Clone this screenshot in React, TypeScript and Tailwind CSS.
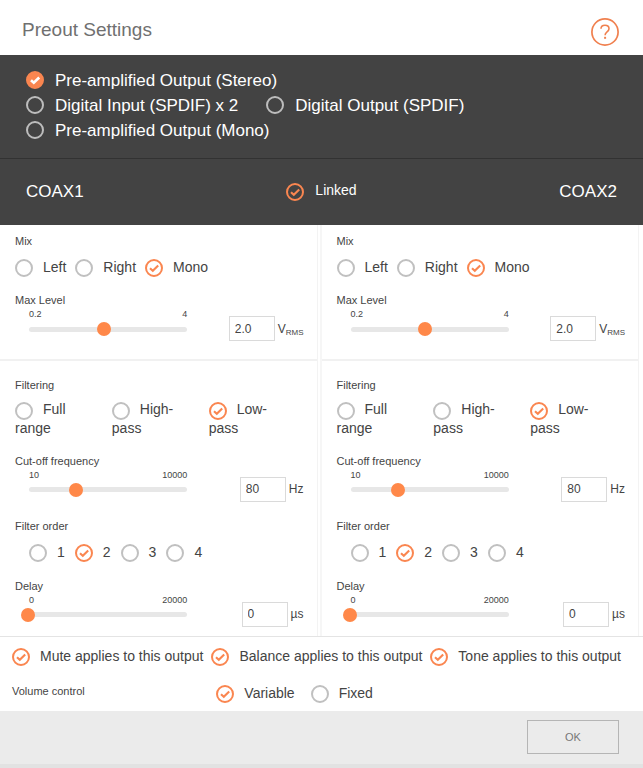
import React from 'react'

type RadioProps = {
  type?: 'radio' | 'checkbox'
  name: string
  label: string
  checked?: boolean
  dark?: boolean
  solid?: boolean
  className?: string
}

const Tick = ({ type = 'radio', name, label, checked, dark, solid, className = '' }: RadioProps) => {
  return (
    <label className={`cursor-pointer ${className}`}>
      <span className={`relative inline-block size-[18px] ${solid ? 'align-[-3px]' : 'align-middle'} ${dark ? 'mr-[11px]' : 'mr-2.5'}`}>
        <input
          type={type}
          name={name}
          defaultChecked={checked}
          className={`peer block size-[18px] cursor-pointer appearance-none rounded-full border-2 checked:border-[#fa8650] ${dark ? 'border-[#bdbdbd]' : 'border-[#c0c0c0]'} ${solid ? 'checked:bg-[#fa8650]' : ''}`}
        />
        <svg viewBox="0 0 18 18" className={`pointer-events-none absolute inset-0 hidden peer-checked:block ${solid ? 'text-white' : 'text-[#fa8650]'}`}>
          <path d="M5 9.2 L7.8 11.8 L13.2 6.5" fill="none" stroke="currentColor" strokeWidth={solid ? 2.6 : 2.1} />
        </svg>
      </span>
      {label}
    </label>
  )
}

type SliderProps = {
  id: string
  label: string
  low: string
  high: string
  min: number
  max: number
  position: number
  value: string
  unit: React.ReactNode
}

const SliderField = ({ id, label, low, high, min, max, position, value, unit }: SliderProps) => {
  return (
    <div>
      <label htmlFor={id} className="block text-[11px] leading-4">{label}</label>
      <div className="flex items-end justify-between">
        <div className="ml-1.5 w-3/5 pb-[5px]">
          <div className="flex justify-between px-2 text-[9px] leading-3">
            <span>{low}</span>
            <span>{high}</span>
          </div>
          <div className="relative mt-0.5 flex h-3.5 items-center">
            <div className="absolute inset-x-2 h-[5px] rounded-sm bg-[#e7e7e7]"></div>
            <input
              id={id}
              type="range"
              min={min}
              max={max}
              step="any"
              defaultValue={position}
              className="relative m-0 block h-3.5 w-full cursor-pointer appearance-none bg-transparent [&::-webkit-slider-thumb]:size-3.5 [&::-webkit-slider-thumb]:appearance-none [&::-webkit-slider-thumb]:rounded-full [&::-webkit-slider-thumb]:bg-[#ff8849]"
            />
          </div>
        </div>
        <div className="mr-0.5 flex items-center gap-[3px] text-xs">
          <input
            type="text"
            aria-label={`${label} value`}
            defaultValue={value}
            className="h-[25px] w-[46px] border border-[#dadada] bg-white px-[5px]"
          />
          <span className="leading-4">{unit}</span>
        </div>
      </div>
    </div>
  )
}

const Channel = ({ id }: { id: string }) => {
  return (
    <div className="border-r-2 border-[#f6f6f6] pr-0.5 last:border-transparent">
      <div className="border-r border-[#f3f3f3]">
        <div className="border-b-2 border-[#f1f1f1] pt-2 pr-[11px] pb-[18px] pl-[15px]">
          <fieldset>
            <legend className="text-[11px] leading-4">Mix</legend>
            <div className="mt-2 flex gap-[9px] text-sm leading-5">
              <Tick name={`${id}-mix`} label="Left" />
              <Tick name={`${id}-mix`} label="Right" />
              <Tick name={`${id}-mix`} label="Mono" checked />
            </div>
          </fieldset>
          <div className="mt-[15px]">
            <SliderField id={`${id}-level`} label="Max Level" low="0.2" high="4" min={0.2} max={4} position={2} value="2.0" unit={<>V<sub className="text-[8px]">RMS</sub></>} />
          </div>
        </div>
        <div className="pt-4 pr-[11px] pb-[9px] pl-[15px]">
          <fieldset>
            <legend className="text-[11px] leading-4">Filtering</legend>
            <div className="mt-2 grid grid-cols-3 text-sm leading-[17px]">
              <Tick name={`${id}-filter`} label="Full range" className="pr-5" />
              <Tick name={`${id}-filter`} label="High-pass" className="pr-5" />
              <Tick name={`${id}-filter`} label="Low-pass" className="pr-5" checked />
            </div>
          </fieldset>
          <div className="mt-4">
            {/* the frequency scale is logarithmic */}
            <SliderField id={`${id}-cutoff`} label="Cut-off frequency" low="10" high="10000" min={1} max={4} position={Math.log10(80)} value="80" unit="Hz" />
          </div>
          <fieldset className="mt-4">
            <legend className="text-[11px] leading-4">Filter order</legend>
            <div className="mt-2 flex gap-2.5 pl-3.5 text-sm leading-5">
              <Tick name={`${id}-order`} label="1" />
              <Tick name={`${id}-order`} label="2" checked />
              <Tick name={`${id}-order`} label="3" />
              <Tick name={`${id}-order`} label="4" />
            </div>
          </fieldset>
          <div className="mt-4">
            <SliderField id={`${id}-delay`} label="Delay" low="0" high="20000" min={0} max={20000} position={0} value="0" unit="µs" />
          </div>
        </div>
      </div>
    </div>
  )
}

const App = () => {
  return (
    <div className="min-h-screen bg-white font-['Liberation_Sans',Arial,sans-serif] text-[#444]">
      <header className="flex items-center justify-between pr-6 pl-[22px]">
        <h1 className="pt-1.5 text-[19px] text-[#707070]">Preout Settings</h1>
        <button type="button" aria-label="Help" className="mt-[18px] mb-[9px] cursor-pointer">
          <svg viewBox="0 0 28 28" className="block size-7" fill="none" stroke="#f0804f">
            <circle cx="14" cy="14" r="13.1" strokeWidth="1.7" />
            <path d="M10 10.8 C10 8.4 11.7 7.3 14 7.3 C16.4 7.3 18 8.6 18 10.7 C18 12.4 17 13.2 15.8 14.1 C14.6 15 14.1 15.6 14.1 17.2" strokeWidth="1.6" />
            <path d="M14.1 18.8 V20.8" strokeWidth="2" />
          </svg>
        </button>
      </header>

      <div className="border-b border-[#323232] bg-[#434343] px-[26px] pt-[13px] pb-[15px] text-[17px] leading-[25px] text-white">
        <div>
          <Tick name="mode" label="Pre-amplified Output (Stereo)" checked dark solid />
        </div>
        <div className="flex gap-7">
          <Tick name="mode" label="Digital Input (SPDIF) x 2" dark solid />
          <Tick name="mode" label="Digital Output (SPDIF)" dark solid />
        </div>
        <div>
          <Tick name="mode" label="Pre-amplified Output (Mono)" dark solid />
        </div>
      </div>

      <div className="flex items-center justify-between bg-[#434343] px-[26px] py-5 text-white">
        <h2 className="text-[17px] leading-[26px]">COAX1</h2>
        <Tick type="checkbox" name="linked" label="Linked" checked dark className="pb-[3px] text-sm leading-5" />
        <h2 className="text-[17px] leading-[26px]">COAX2</h2>
      </div>

      <main>
        <div className="grid grid-cols-2 border-b border-[#e4e4e4]">
          <Channel id="coax1" />
          <Channel id="coax2" />
        </div>
        <div className="flex gap-2 px-3 pt-[9px] text-sm leading-5">
          <Tick type="checkbox" name="mute" label="Mute applies to this output" checked />
          <Tick type="checkbox" name="balance" label="Balance applies to this output" checked />
          <Tick type="checkbox" name="tone" label="Tone applies to this output" checked />
        </div>
        <div role="radiogroup" aria-labelledby="volume" className="mt-[17px] flex pb-2">
          <span id="volume" className="w-1/3 pl-3 text-[11px] leading-4">Volume control</span>
          <div className="flex gap-4 pl-0.5 text-sm leading-5">
            <Tick name="volume" label="Variable" checked />
            <Tick name="volume" label="Fixed" />
          </div>
        </div>
      </main>

      <footer className="flex justify-end border-b-4 border-[#e2e2e2] bg-[#ebebeb] pt-[9px] pr-6 pb-2.5">
        <button type="button" className="h-[34px] w-[92px] cursor-pointer border border-[#b5b5b5] text-[11px] text-[#777]">OK</button>
      </footer>
    </div>
  )
}

export default App
